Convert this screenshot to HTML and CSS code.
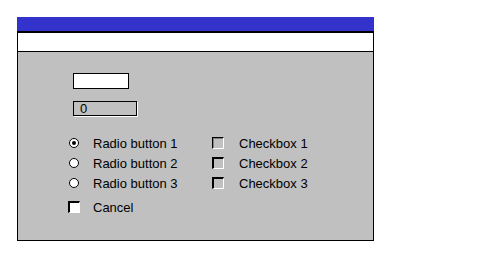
FILE: index.html
```html
<!DOCTYPE html>
<html lang="en">
<head>
    <meta charset="UTF-8">
    <title>Dialog</title>
    <link rel="stylesheet" href="styles.css">
</head>
<body>
    <div class="window">
        <div class="title-bar"></div>
        <div class="menu-bar"></div>
        <div class="panel">
            <div class="field"></div>
            <div class="field field-disabled">0</div>

            <div class="options">
                <div class="option">
                    <span class="radio checked"></span>
                    <span class="label">Radio button 1</span>
                </div>
                <div class="option">
                    <span class="check first"></span>
                    <span class="label">Checkbox 1</span>
                </div>
                <div class="option">
                    <span class="radio"></span>
                    <span class="label">Radio button 2</span>
                </div>
                <div class="option">
                    <span class="check"></span>
                    <span class="label">Checkbox 2</span>
                </div>
                <div class="option">
                    <span class="radio"></span>
                    <span class="label">Radio button 3</span>
                </div>
                <div class="option">
                    <span class="check"></span>
                    <span class="label">Checkbox 3</span>
                </div>
            </div>

            <div class="option cancel">
                <span class="check white"></span>
                <span class="label">Cancel</span>
            </div>
        </div>
    </div>
</body>
</html>
```

FILE: styles.css
```css
body {
    margin: 0;
    padding: 17px 0 0 17px;
    background-color: #fff;
    font-family: "Liberation Sans", Arial, sans-serif;
    font-size: 13px;
    color: #000;
}
.window { width: 357px; }
.title-bar {
    height: 14px;
    background-color: #3333cc;
    border-bottom: 2px solid #000;
}
.menu-bar {
    height: 18px;
    background-color: #fff;
    border: 1px solid #000;
    border-top: none;
}
.panel {
    height: 188px;
    padding: 21px 0 0 51px;
    box-sizing: border-box;
    background-color: #c0c0c0;
    border: 1px solid #000;
    border-top: none;
    height: 189px;
}
.field {
    margin-left: 4px;
    width: 56px;
    height: 16px;
    box-sizing: border-box;
    border: 1px solid #000;
    background-color: #fff;
}
.field-disabled {
    margin-top: 12px;
    width: 64px;
    height: 15px;
    padding-left: 6px;
    background-color: #c0c0c0;
    box-shadow: 1px 1px 0 #fff;
    line-height: 13px;
}
.options {
    display: grid;
    grid-template-columns: 143px auto;
    margin-top: 17px;
}
.option {
    display: flex;
    align-items: center;
    height: 20px;
}
.option .label { white-space: nowrap; }
.radio {
    position: relative;
    width: 10px;
    height: 10px;
    box-sizing: border-box;
    margin-right: 14px;
    border: 1px solid #000;
    border-radius: 50%;
    background-color: #fff;
}
.radio.checked::after {
    content: "";
    position: absolute;
    left: 2px;
    top: 2px;
    width: 4px;
    height: 4px;
    border-radius: 50%;
    background-color: #000;
}
.check {
    width: 12px;
    height: 12px;
    box-sizing: border-box;
    margin-right: 15px;
    border-top: 2px solid #000;
    border-left: 2px solid #000;
    border-right: 1px solid #fff;
    border-bottom: 1px solid #fff;
}
.check.first {
    border-top: 1px solid #000;
    border-left: 1px solid #000;
    box-shadow: inset 1px 1px 0 #808080;
}
.check.white { background-color: #fff; margin-right: 13px; }
.cancel { margin-top: 4px; margin-left: -1px; }
```
